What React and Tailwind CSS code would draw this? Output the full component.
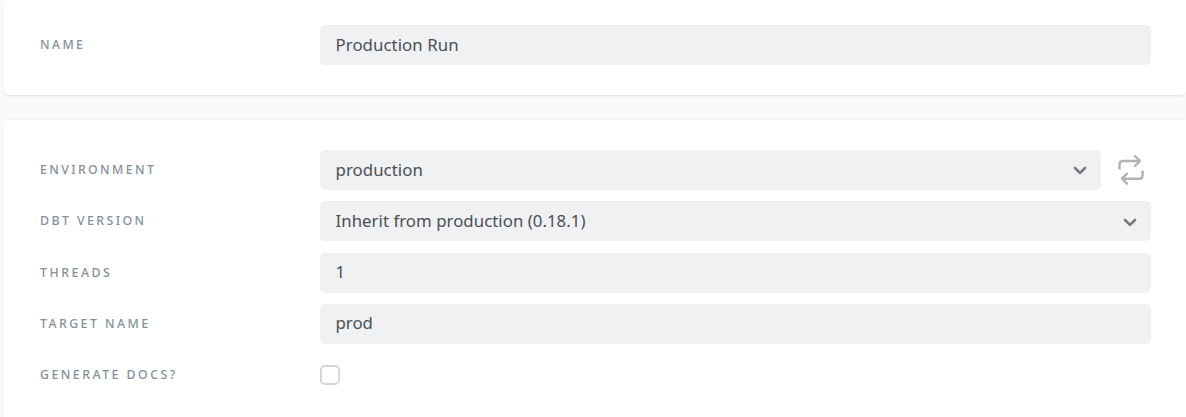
const controlBase =
  'flex h-10 items-center rounded-[5px] bg-[#f0f1f3] px-[15.5px] text-[16.8px] leading-none text-[#4a4f55]';

function Chevron({ className }) {
  return (
    <svg
      className={`mr-[-1.5px] h-[9px] w-[14px] shrink-0 ${className}`}
      viewBox="0 0 14 9"
      fill="none"
      stroke="#77797d"
      strokeWidth="2.6"
      strokeLinecap="round"
      strokeLinejoin="round"
    >
      <path d="M2 2 L7 6.9 L12 2" />
    </svg>
  );
}

function RefreshIcon() {
  return (
    <svg
      className="block h-[32px] w-[28px]"
      viewBox="0 0 28 32"
      fill="none"
      stroke="#afb3b6"
      strokeWidth="2.4"
      strokeLinecap="butt"
      strokeLinejoin="round"
    >
      <path d="M2.5 15.5V10.5Q2.5 7 6 7H22.5" />
      <path d="M18 2L23 7L18 12" strokeLinecap="round" />
      <path d="M25.6 16.5V21.2Q25.6 24.7 22.1 24.7H5.5" />
      <path d="M10 19.7L5 24.7L10 29.7" strokeLinecap="round" />
    </svg>
  );
}

function Label({ children, spacing }) {
  return (
    <div className={`w-[280px] shrink-0 text-[12.3px] leading-4 font-[550] text-[#84909a] ${spacing}`}>
      {children}
    </div>
  );
}

function TextValue({ children, spacing = '' }) {
  return (
    <div className={`${controlBase} w-[831px]`}>
      <span className={spacing}>{children}</span>
    </div>
  );
}

function SelectValue({ children, width, spacing, chevron = '' }) {
  return (
    <div className={`${controlBase} ${width} justify-between`}>
      <span className={spacing}>{children}</span>
      <Chevron className={chevron} />
    </div>
  );
}

export default function App() {
  return (
    <main className="flex h-[417px] w-[1186px] flex-col gap-[25px] overflow-hidden bg-[#f8fafc] pl-[3px] font-['Noto_Sans',sans-serif]">
      <section className="h-[95px] shrink-0 rounded-b-[5px] bg-white pt-[25px] pl-[37px] shadow-[0_1px_2px_rgba(0,0,0,0.09)]">
        <div className="flex h-10 items-center">
          <Label spacing="tracking-[2.4px]">NAME</Label>
          <TextValue spacing="tracking-[0.07px]">Production Run</TextValue>
        </div>
      </section>

      <section className="h-[330px] shrink-0 rounded-tl-[5px] bg-white pt-[30px] pl-[37px] shadow-[0_0_2px_rgba(0,0,0,0.09)]">
        <div className="flex flex-col gap-[11.33px]">
          <div className="flex h-10 items-center">
            <Label spacing="tracking-[2.4px]">ENVIRONMENT</Label>
            <SelectValue width="w-[781px]" spacing="tracking-[0.07px]">production</SelectValue>
            <button className="ml-4" aria-label="Refresh environments">
              <RefreshIcon />
            </button>
          </div>
          <div className="flex h-10 items-center">
            <Label spacing="tracking-[2.45px]">DBT VERSION</Label>
            <SelectValue width="w-[831px]" spacing="tracking-[0.04px]" chevron="mt-[2px]">
              Inherit from production (0.18.1)
            </SelectValue>
          </div>
          <div className="flex h-10 items-center">
            <Label spacing="tracking-[2.55px]">THREADS</Label>
            <TextValue>1</TextValue>
          </div>
          <div className="flex h-10 items-center">
            <Label spacing="tracking-[2.45px]">TARGET NAME</Label>
            <TextValue spacing="mb-px">prod</TextValue>
          </div>
          <div className="flex h-10 items-center">
            <Label spacing="tracking-[2.5px]">GENERATE DOCS?</Label>
            <div
              className="size-5 rounded-[5px] border-2 border-[#d5d6d8] bg-white"
              role="checkbox"
              aria-checked="false"
              aria-label="Generate docs"
            />
          </div>
        </div>
      </section>
    </main>
  );
}
